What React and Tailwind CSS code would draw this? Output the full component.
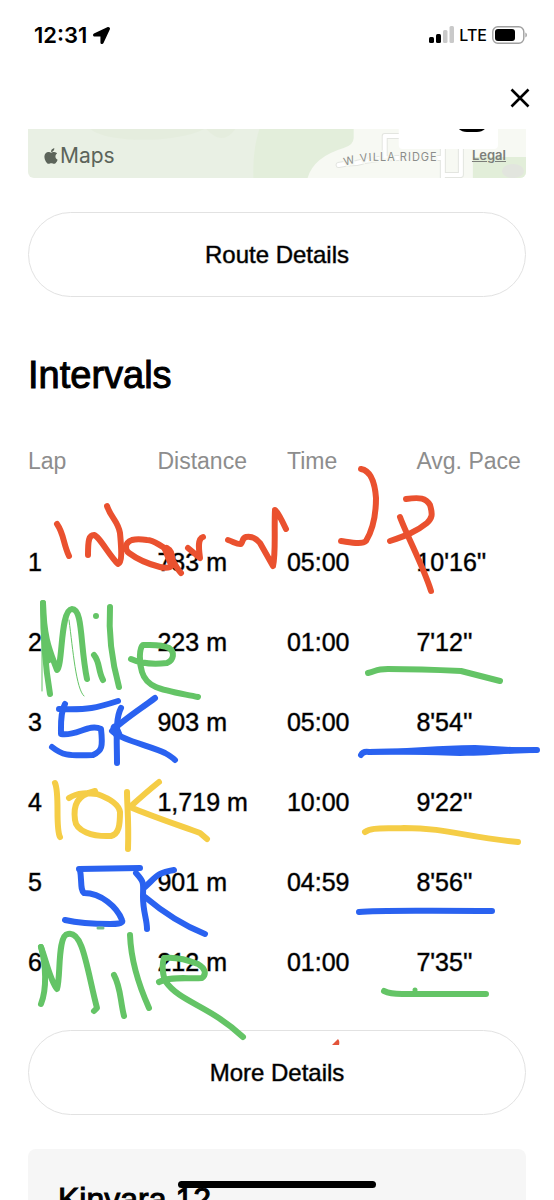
import React from "react";
import { FaApple, FaLocationArrow } from "react-icons/fa";

const laps = [
  { lap: 1, distance: "783 m", time: "05:00", pace: "10'16''" },
  { lap: 2, distance: "223 m", time: "01:00", pace: "7'12''" },
  { lap: 3, distance: "903 m", time: "05:00", pace: "8'54''" },
  { lap: 4, distance: "1,719 m", time: "10:00", pace: "9'22''" },
  { lap: 5, distance: "901 m", time: "04:59", pace: "8'56''" },
  { lap: 6, distance: "212 m", time: "01:00", pace: "7'35''" },
];

const StatusBar = () => (
  <div className="flex h-[70px] shrink-0 items-center justify-between pl-[34px] pr-[26px] font-[Inter,sans-serif]">
    <div className="flex items-center gap-1.5">
      <span className="text-[22px] font-semibold">12:31</span>
      <FaLocationArrow className="size-[17px]" />
    </div>
    <div className="flex items-center gap-[5px]">
      <svg width="25" height="18" viewBox="0 0 25 18" aria-label="Signal">
        <rect x="0" y="11" width="5" height="6" rx="1.5" />
        <rect x="7" y="8" width="5" height="9" rx="1.5" />
        <rect x="14" y="4" width="4.5" height="13" rx="1.5" fill="#c9c9c9" />
        <rect x="20.5" y="0" width="4.5" height="17" rx="1.5" fill="#c9c9c9" />
      </svg>
      <span className="text-base font-medium">LTE</span>
      <svg width="36" height="18" viewBox="0 0 36 18" aria-label="Battery">
        <rect x="0.8" y="0.8" width="31" height="16.4" rx="5" fill="none" stroke="#a0a0a0" strokeWidth="1.4" />
        <rect x="3" y="3" width="20" height="12" rx="3" />
        <path d="M33.4 6.5c2 .8 2 4.200 0 5z" fill="#a0a0a0" />
      </svg>
    </div>
  </div>
);

const MapPreview = () => (
  <div className="relative flex h-[49px] shrink-0 items-center justify-between overflow-hidden rounded-b-md bg-[#e9f0e4] pl-3.5 pr-5 pt-1 font-[Inter,sans-serif]">
    <svg
      className="absolute inset-0 size-full"
      viewBox="0 0 497 49"
      preserveAspectRatio="xMaxYMid slice"
      aria-hidden="true"
    >
      <path d="M62 0C80 15 150 14 176 0zM178 0Q194 18 207 0z" fill="#e5edde" />
      <path d="M231 0Q224 20 225 49H400V0z" fill="#e3eedb" />
      <path d="M325 0V9Q325 16 315 19Q285 28 279 49H497V0z" fill="#f7f9f3" />
      <path d="M444 28H497V49H444z" fill="#e2eed9" />
      <ellipse cx="484" cy="42" rx="11" ry="7" fill="#e2e5de" />
      <g fill="none" strokeLinejoin="round" strokeLinecap="round">
        <path
          d="M310 36Q318 34 328 34Q346 29 370 29H414M356 29V7H375M414 20V54M432 20V46H414"
          stroke="#e3e5e0"
          strokeWidth="6"
        />
        <path
          d="M310 36Q318 34 328 34Q346 29 370 29H414M356 29V7H375M414 20V54M432 20V46H414"
          stroke="#fff"
          strokeWidth="4"
        />
      </g>
      <path id="villaRidge" d="M316 37Q334 31 352 32H420" fill="none" />
      <text fontSize="11" fill="#8b8d8a" letterSpacing="1" stroke="#f7f9f3" strokeWidth="3" paintOrder="stroke">
        <textPath href="#villaRidge">W VILLA RIDGE</textPath>
      </text>
      <path d="M370 0H469V16Q469 20 465 20H374Q370 20 370 16z" fill="#fff" />
      <path d="M430 0Q433 3 438 3H448Q453 3 456 0z" />
    </svg>
    <span className="relative flex items-center text-[#5c645a]">
      <FaApple className="size-[18px]" />
      <span className="text-[21px]">Maps</span>
    </span>
    <a href="#legal" className="relative text-[13px] font-semibold text-[#7c7f7a] underline">
      Legal
    </a>
  </div>
);

const PillButton = ({ children }) => (
  <button
    type="button"
    className="h-[85px] w-full shrink-0 rounded-full border border-[#e2e2e2] text-2xl [-webkit-text-stroke:1px_#00000070]"
  >
    {children}
  </button>
);

// Finger-drawn notes that lie over the laps
const Ink = () => (
  <svg
    className="pointer-events-none absolute left-0 top-0 h-[1200px] w-full"
    viewBox="0 0 554 1200"
    preserveAspectRatio="none"
    fill="none"
    strokeLinecap="round"
    strokeLinejoin="round"
    aria-hidden="true"
  >
    {/* Warm up */}
    <g stroke="#ea512f" strokeWidth="6">
      <path d="M57 524C64 534 63 543 69 556" />
      <path d="M88 555C88 540 89 535 94 535C99 536 109 555 118 564C123 562 121 545 120 533C118 521 111 518 107 506" />
      <path d="M181 573C173 564 171 553 163 547C156 543 153 540 147 540C140 539 136 539 132 540C124 543 125 550 129 553C137 559 148 564 160 567C173 570 174 564 172 556C171 550 168 548 165 548" />
      <path d="M166 549L171 562" strokeWidth="8" />
      <path d="M188 548L200 558C199 550 197 539 203 537" />
      <path d="M228 540C234 542 238 545 241 544C243 542 242 538 246 537C252 536 256 538 260 543L273 566C276 553 274 530 275 510Q278 512 286 529" />
      <path d="M361 469C372 471 375 484 376 498C376 515 372 531 366 541C362 545 349 542 341 541" />
      <path d="M406 499C420 497 426 498 430 505C433 515 432 518 427 523C416 532 405 536 390 541" />
      <path d="M400 517C407 536 424 568 431 591" />
    </g>
    <path d="M332 1045L338 1039Q340 1041 339 1045z" fill="#e2543a" />

    {/* Mile */}
    <g stroke="#64c466" strokeWidth="6">
      <path d="M43 603C43 632 45 665 50 694" />
      <path d="M43 603C44 640 50 651 57 670C63 665 60 610 72 609C83 609 80 645 87 679" />
      <path d="M42 640V691M69 620C73 650 76 689 84 696" strokeWidth="1" />
      <path d="M45 638L48 660" strokeWidth="7" />
      <path d="M96 616V616M94 655C100 662 98 671 103 680" />
      <path d="M110 607C108 640 113 665 119 687" />
      <path d="M131 659C142 664 158 664 167 663C174 660 175 652 169 648C161 644 152 645 143 645C139 648 139 663 142 672C147 689 164 690 198 697" />
      <path d="M368 673C377 671 375 669 388 669C415 669 440 670 461 671L500 681" />
    </g>

    {/* 5K */}
    <g stroke="#2a62f0" strokeWidth="6">
      <path d="M59 709C89 710 96 708 118 701" />
      <path d="M65 704C60 713 61 725 61 734C76 737 89 723 101 729C103 747 102 751 93 755C67 756 62 755 52 747" />
      <path d="M121 708C115 719 117 740 117 763" />
      <path d="M155 698C142 708 123 720 112 731C121 740 151 746 165 753Q172 757 175 760" />
      <path d="M115 728L118 735" strokeWidth="9" />
      <path d="M361 755Q363 751 369 752L537 750" />
      <path d="M369 749C410 749 440 745 475 745C500 746 520 748 537 748V753C510 753 490 756 460 756C430 755 400 754 369 754z" fill="#2a62f0" stroke="none" />
    </g>

    {/* 10K */}
    <g stroke="#f5cd46" strokeWidth="6">
      <path d="M55 783C60 794 55 827 60 837" />
      <path d="M69 798C78 792 88 793 97 794C111 799 119 805 120 812C120 825 119 834 111 836C92 837 76 831 75 820C73 805 77 795 95 791" />
      <path d="M127 792C127 806 129 820 128 849" />
      <path d="M159 782C149 790 141 797 130 807C151 816 178 825 200 833L207 839" />
      <path d="M365 832C372 827 384 829 404 828C447 828 465 837 518 842" />
    </g>

    {/* 5K */}
    <g stroke="#2a62f0" strokeWidth="6">
      <path d="M79 869L140 868" />
      <path d="M80 870C82 880 80 890 84 893C101 893 117 907 122 920C124 924 115 924 110 924C90 924 78 923 65 920" />
      <path d="M136 873C145 883 143 883 143 897C143 912 147 919 147 929" />
      <path d="M174 870C157 873 157 876 145 887M145 897C158 908 180 924 205 934" />
      <path d="M359 912C380 910 410 911 492 911" />
    </g>

    {/* Mile */}
    <g stroke="#64c466" strokeWidth="6">
      <path d="M41 947C46 965 47 989 41 1004" />
      <path d="M41 947C46 960 50 980 57 989C61 978 57 935 68 934C83 930 87 970 97 1008L94 1011" />
      <path d="M114 975C121 988 120 1000 124 1016" />
      <path d="M130 935C131 960 140 988 149 1008" />
      <path d="M159 982C170 976 188 979 202 978C207 974 205 968 198 964C188 960 174 957 164 958C162 963 162 975 166 982C180 1002 210 1006 243 1037" />
      <path d="M384 991Q390 994 402 994H486" />
      <path d="M415 990V990" strokeWidth="5" />
    </g>
    <path d="M98 928H103" stroke="#75bb8b" strokeWidth="3" />
  </svg>
);

const App = () => (
  <div className="relative flex h-screen flex-col overflow-hidden bg-white px-7 font-['Liberation_Sans',Arial,sans-serif] text-black">
    <header className="-mx-7 shrink-0">
      <StatusBar />
      <div className="flex h-[59px] justify-end pr-[22px] pt-4">
        <button type="button" aria-label="Close" className="flex size-6 items-center justify-center">
          <svg width="24" height="24" viewBox="0 0 24 24" fill="none" stroke="currentColor" strokeWidth="2.600">
            <path d="M3.500 3.500L20.500 20.500M20.500 3.500L3.500 20.500" />
          </svg>
        </button>
      </div>
    </header>

    <MapPreview />
    <div className="mt-[34px] flex shrink-0">
      <PillButton>Route Details</PillButton>
    </div>

    <h2 className="mt-[58px] shrink-0 text-[38px] leading-10 [-webkit-text-stroke:1px_black]">Intervals</h2>

    <table className="mt-[41px] w-full shrink-0 table-fixed text-left">
      <thead>
        <tr className="h-[87px] align-top text-[23px] leading-[50px] text-[#8d8d8d]">
          <th className="w-[26%] font-normal">Lap</th>
          <th className="w-[26%] font-normal">Distance</th>
          <th className="w-[26%] font-normal">Time</th>
          <th className="whitespace-nowrap font-normal">Avg. Pace</th>
        </tr>
      </thead>
      <tbody>
        {laps.map((row) => (
          <tr key={row.lap} className="h-20 text-[25px] [-webkit-text-stroke:1px_#00000070]">
            <td>{row.lap}</td>
            <td>{row.distance}</td>
            <td>{row.time}</td>
            <td>{row.pace}</td>
          </tr>
        ))}
      </tbody>
    </table>

    <div className="mt-[27px] flex shrink-0">
      <PillButton>More Details</PillButton>
    </div>

    <section className="mt-[34px] flex-1 rounded-t-lg bg-[#f6f6f6] px-[30px] pt-[30px]">
      <h3 className="text-[32px] leading-10 [-webkit-text-stroke:1px_black]">Kinvara 12</h3>
    </section>

    <Ink />
    <div className="absolute bottom-3 left-1/2 h-[7px] w-[198px] -translate-x-1/2 rounded-full bg-black" />
  </div>
);

export default App;
